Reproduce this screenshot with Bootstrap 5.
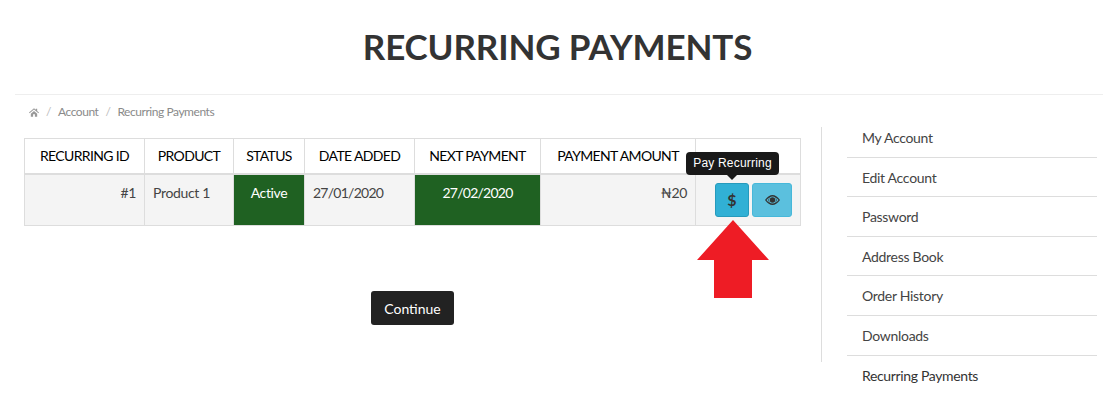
<!DOCTYPE html>
<html lang="en">
<head>
    <meta charset="UTF-8">
    <title>Recurring Payments</title>
    <link href="https://cdn.jsdelivr.net/npm/bootstrap@5.3.0/dist/css/bootstrap.min.css" rel="stylesheet">
    <style>
        body {
            font-family: Lato, "Liberation Sans", sans-serif;
            font-size: 14px;
            color: #444;
            background: #fff;
            min-height: 411px;
        }

        .page-title {
            font-size: 35px;
            font-weight: 700;
            line-height: 44px;
            letter-spacing: -0.15px;
            color: #333;
            text-align: center;
            margin: 0;
            padding: 24px 3px 0 0;
            height: 94px;
        }

        .title-wrap {
            margin: 0 15px;
            border-bottom: 1px solid #eee;
            height: 95px;
        }

        .crumbs {
            margin: 0 0 0 29px;
            padding: 2px 0 0;
            height: 32px;
            align-items: center;
            font-size: 12px;
            letter-spacing: -0.45px;
            color: #999;
            --bs-breadcrumb-divider-color: #bbb;
            --bs-breadcrumb-item-padding-x: 7px;
            --bs-breadcrumb-margin-bottom: 0;
        }

        .crumbs a {
            color: #8a8a8a;
            text-decoration: none;
        }

        .main-wrap {
            width: 1118px;
        }

        .left-side {
            width: 821px;
            padding: 11px 20px 0 24px;
        }

        .pay-table {
            width: 776px;
            table-layout: fixed;
            border-collapse: collapse;
            margin: 0;
            color: #444;
            font-size: 14px;
            letter-spacing: -0.35px;
        }

        .pay-table th,
        .pay-table td {
            border: 1px solid #ddd;
        }

        .pay-table th {
            font-weight: 400;
            color: #000;
            text-align: center;
            height: 35px;
            padding: 0;
            vertical-align: middle;
            border-bottom-width: 2px;
            background: #fff;
            letter-spacing: -0.65px;
        }

        .pay-table td {
            background: #f4f4f4;
            height: 52px;
            padding: 8px 8px 0;
            line-height: 20px;
            vertical-align: top;
            --bs-table-accent-bg: transparent;
        }

        .pay-table .paid-cell {
            background: #1f6122;
            color: #fff;
            text-align: center;
        }

        .pay-table .date-txt {
            letter-spacing: -0.75px;
        }

        .w-id { width: 120px; }
        .w-product { width: 89px; }
        .w-status { width: 71px; }
        .w-date { width: 110px; }
        .w-next { width: 126px; }
        .w-amount { width: 155px; }
        .w-action { width: 105px; }

        .action-cell {
            position: relative;
        }

        .action-btns {
            padding-left: 11px;
            gap: 3px;
        }

        .icon-btn {
            height: 34px;
            padding: 0;
            border-radius: 3px;
            color: #333;
            display: flex;
            align-items: center;
            justify-content: center;
            font-size: 16px;
            font-weight: 700;
        }

        .pay-btn {
            width: 34px;
            background: #31b0d5;
            border: 1px solid #269abc;
        }

        .view-btn {
            width: 40px;
            background: #5bc0de;
            border: 1px solid #46b8da;
        }

        .tip-box {
            position: absolute;
            left: -29px;
            top: -31px;
            width: 93px;
            height: 23px;
            background: #191919;
            border-radius: 4px;
            color: #fff;
            font-family: "Liberation Sans", Arial, sans-serif;
            font-size: 12px;
            letter-spacing: 0.2px;
            line-height: 23px;
            text-align: center;
            white-space: nowrap;
        }

        .tip-box::after {
            content: "";
            position: absolute;
            left: 41px;
            bottom: -5px;
            border-left: 5px solid transparent;
            border-right: 5px solid transparent;
            border-top: 5px solid #191919;
        }

        .red-arrow {
            position: absolute;
            left: 697px;
            top: 220px;
        }

        .continue-row {
            margin-top: 65px;
            text-align: center;
        }

        .continue-btn {
            width: 83px;
            height: 34px;
            padding: 0;
            background: #222;
            border: 0;
            border-radius: 3px;
            color: #fff;
            font-size: 14px;
        }

        .side-wrap {
            width: 297px;
            height: 235px;
            padding-left: 25px;
            border-left: 1px solid #ddd;
        }

        .side-menu {
            margin-top: -8.9px;
            width: 250px;
            letter-spacing: -0.3px;
        }

        .side-menu .list-group-item {
            flex: 0 0 39.6px;
            border: 0;
            border-bottom: 1px solid #ddd;
            border-radius: 0;
            padding: 0 0 0 15px;
            color: #444;
            font-size: 14px;
            display: flex;
            align-items: center;
            background: transparent;
        }

        .side-menu .list-group-item.last-link {
            border-bottom: 0;
            color: #333;
            letter-spacing: -0.35px;
        }
    </style>
</head>
<body class="position-relative">
    <div class="title-wrap">
        <h1 class="page-title">RECURRING PAYMENTS</h1>
    </div>

    <ol class="breadcrumb crumbs d-flex">
        <li class="breadcrumb-item d-flex align-items-center">
            <a href="#" aria-label="Home">
                <svg class="d-block" width="10" height="9" viewBox="0 0 22 19" fill="#999"><path d="M11 0 L0 9.5 L1.4 11 L11 2.8 L20.6 11 L22 9.5 L18 6 V1 H15 V3.4 Z M4 12 V19 H9 V13.5 H13 V19 H18 V12 L11 6 Z"/></svg>
            </a>
        </li>
        <li class="breadcrumb-item"><a href="#">Account</a></li>
        <li class="breadcrumb-item"><a href="#">Recurring Payments</a></li>
    </ol>

    <div class="main-wrap d-flex">
        <div class="left-side">
            <table class="table pay-table">
                <thead>
                    <tr>
                        <th class="w-id">RECURRING ID</th>
                        <th class="w-product">PRODUCT</th>
                        <th class="w-status">STATUS</th>
                        <th class="w-date">DATE ADDED</th>
                        <th class="w-next">NEXT PAYMENT</th>
                        <th class="w-amount">PAYMENT AMOUNT</th>
                        <th class="w-action"></th>
                    </tr>
                </thead>
                <tbody>
                    <tr>
                        <td class="text-end">#1</td>
                        <td>Product 1</td>
                        <td class="paid-cell">Active</td>
                        <td class="date-txt">27/01/2020</td>
                        <td class="paid-cell date-txt">27/02/2020</td>
                        <td class="text-end">₦20</td>
                        <td>
                            <div class="action-btns d-flex">
                                <div class="action-cell">
                                    <button class="btn icon-btn pay-btn" type="button">$</button>
                                    <div class="tip-box">Pay Recurring</div>
                                </div>
                                <button class="btn icon-btn view-btn" type="button" aria-label="View">
                                    <svg width="15" height="10" viewBox="0 0 30 20"><path fill="#333" fill-rule="evenodd" d="M0 10 C5 3 10 0 15 0 C20 0 25 3 30 10 C25 17 20 20 15 20 C10 20 5 17 0 10 Z M15 3 A7 7 0 1 0 15 17 A7 7 0 1 0 15 3 Z M3 10 C5 12.6 7 14.4 9.4 15.6 A8 8 0 0 1 9.4 4.4 C7 5.6 5 7.4 3 10 Z M27 10 C25 7.4 23 5.6 20.6 4.4 A8 8 0 0 1 20.6 15.6 C23 14.4 25 12.6 27 10 Z"/><circle cx="15" cy="10" r="5.5" fill="#333"/></svg>
                                </button>
                            </div>
                        </td>
                    </tr>
                </tbody>
            </table>
            <div class="continue-row">
                <button class="btn continue-btn" type="button">Continue</button>
            </div>
        </div>
        <div class="side-wrap">
            <div class="list-group side-menu">
                <a href="#" class="list-group-item">My Account</a>
                <a href="#" class="list-group-item">Edit Account</a>
                <a href="#" class="list-group-item">Password</a>
                <a href="#" class="list-group-item">Address Book</a>
                <a href="#" class="list-group-item">Order History</a>
                <a href="#" class="list-group-item">Downloads</a>
                <a href="#" class="list-group-item last-link">Recurring Payments</a>
            </div>
        </div>
    </div>

    <svg class="red-arrow" width="72" height="78" viewBox="0 0 72 78"><path fill="#ee1c25" d="M36 0 L72 40 H55 V78 H17 V40 H0 Z"/></svg>
</body>
</html>
